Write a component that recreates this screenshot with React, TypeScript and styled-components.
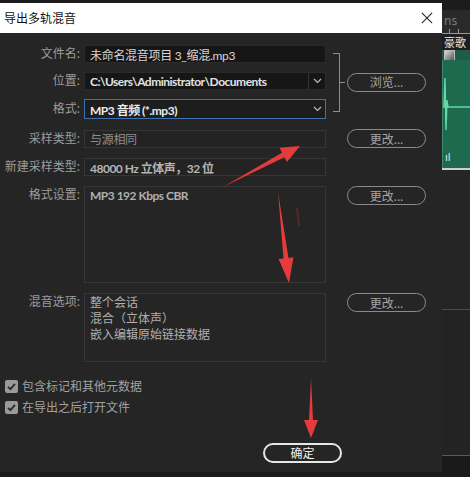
import React from "react";
import styled, { createGlobalStyle } from "styled-components";

const GlobalStyle = createGlobalStyle`
  html, body {
    margin: 0;
    padding: 0;
    background: #1b1b1b;
  }
  body {
    font-family: "Noto Sans", "Noto Sans CJK SC", sans-serif;
  }
`;

const CJK = `"Noto Sans", "Noto Sans CJK SC", sans-serif`;
const FIELD = `Lato, "Noto Sans CJK SC", sans-serif`;

// annotation arrows drawn on top of the screenshot
type ArrowSpec = { tail: [number, number]; tip: [number, number]; hl: number; hw: number; sw: number };

const arrows: ArrowSpec[] = [
  { tail: [223, 187], tip: [300, 146], hl: 19, hw: 16, sw: 5 },
  { tail: [278, 192], tip: [289, 283], hl: 25, hw: 15, sw: 5 },
  { tail: [311, 378], tip: [311, 438], hl: 18, hw: 14, sw: 4 },
];

function arrowPoints(a: ArrowSpec) {
  const [tx, ty] = a.tail;
  const [px, py] = a.tip;
  const len = Math.hypot(px - tx, py - ty);
  const dx = (px - tx) / len;
  const dy = (py - ty) / len;
  const nx = -dy;
  const ny = dx;
  const bx = px - dx * a.hl;
  const by = py - dy * a.hl;
  const pts = [
    [tx, ty],
    [bx + (nx * a.sw) / 2, by + (ny * a.sw) / 2],
    [bx + (nx * a.hw) / 2, by + (ny * a.hw) / 2],
    [px, py],
    [bx - (nx * a.hw) / 2, by - (ny * a.hw) / 2],
    [bx - (nx * a.sw) / 2, by - (ny * a.sw) / 2],
  ];
  return pts.map((p) => p.join(",")).join(" ");
}

function Check() {
  return (
    <CheckBox>
      <svg width="11" height="11" viewBox="0 0 11 11">
        <path d="M2 5.8 L4.4 8.2 L9 2.8" stroke="#2a2a2a" strokeWidth="1.8" fill="none" />
      </svg>
    </CheckBox>
  );
}

function ChevronSvg() {
  return (
    <svg width="9" height="6" viewBox="0 0 9 6">
      <path d="M1 1 L4.5 4.5 L8 1" stroke="#bdbdbd" strokeWidth="1.2" fill="none" />
    </svg>
  );
}

export default function App() {
  return (
    <Page>
      <GlobalStyle />
      <Dialog>
        <TitleBar>
          <Title>导出多轨混音</Title>
          <CloseIcon viewBox="0 0 14 14">
            <path d="M1 1 L13 13 M13 1 L1 13" stroke="#222" strokeWidth="1.2" fill="none" />
          </CloseIcon>
        </TitleBar>
        <Body>
          <FileGroup>
            <FileRows>
              <Row>
                <Label>文件名:</Label>
                <Field $tone="dark">
                  <FieldText $color="#d6d6d6">未命名混音项目 3_缩混.mp3</FieldText>
                </Field>
              </Row>
              <Row>
                <Label>位置:</Label>
                <Field $tone="dark">
                  <FieldText $color="#e2e2e2" $bold>
                    C:\Users\Administrator\Documents
                  </FieldText>
                  <Chevron $divider>
                    <ChevronSvg />
                  </Chevron>
                </Field>
              </Row>
              <Row>
                <Label>格式:</Label>
                <Field $tone="focus">
                  <FieldText $color="#ececec" $bold>
                    MP3 音频 (*.mp3)
                  </FieldText>
                  <Chevron>
                    <ChevronSvg />
                  </Chevron>
                </Field>
              </Row>
            </FileRows>
            <Bracket />
            <PillButton>浏览...</PillButton>
          </FileGroup>

          <Row>
            <Label>采样类型:</Label>
            <Field $tone="flat">
              <FieldText $color="#8e8e8e">与源相同</FieldText>
            </Field>
            <PillButton $gap>更改...</PillButton>
          </Row>

          <Row>
            <Label>新建采样类型:</Label>
            <Field $tone="flat">
              <FieldText $color="#b4b4b4" $bold>
                48000 Hz 立体声，32 位
              </FieldText>
            </Field>
          </Row>

          <Row $top>
            <Label>格式设置:</Label>
            <Box $h={97}>
              <BoxLine $bold>MP3 192 Kbps CBR</BoxLine>
            </Box>
            <PillButton $gap>更改...</PillButton>
          </Row>

          <Row $top>
            <Label>混音选项:</Label>
            <Box $h={69}>
              <BoxLine>整个会话</BoxLine>
              <BoxLine>混合（立体声）</BoxLine>
              <BoxLine>嵌入编辑原始链接数据</BoxLine>
            </Box>
            <PillButton $gap>更改...</PillButton>
          </Row>

          <Checks>
            <CheckRow>
              <Check />
              <CheckLabel>包含标记和其他元数据</CheckLabel>
            </CheckRow>
            <CheckRow>
              <Check />
              <CheckLabel>在导出之后打开文件</CheckLabel>
            </CheckRow>
          </Checks>

          <Footer>
            <OkButton>确定</OkButton>
          </Footer>
        </Body>
      </Dialog>

      <Backdrop>
        <Seg $h={10} $bg="#1c1c1c" />
        <Seg $h={20} $bg="#2a2a2a">
          <StripText $color="#7a7a7a">ns</StripText>
        </Seg>
        <Ruler>
          <Tick $x={7} />
          <Tick $x={16} />
        </Ruler>
        <Seg $h={16} $bg="#1e1e1e">
          <StripText $color="#eeeeee" $size={11}>
            豪歌
          </StripText>
        </Seg>
        <Seg $h={10} $bg="#1f5c45">
          <ClipIcon />
        </Seg>
        <Wave>
          <svg width="28" height="108" viewBox="0 0 28 108">
            <path d="M0 47 L2 47 L3 18 L4 70 L5 40 L6 47 L28 47" stroke="#63d9ab" strokeWidth="1.4" fill="none" />
            <line x1="0.5" y1="0" x2="0.5" y2="108" stroke="#3f8a6c" strokeWidth="1" />
          </svg>
          <WaveLabel>ıl</WaveLabel>
        </Wave>
        <Seg $h={2} $bg="#cfcfcf" />
        <Seg $h={139} $bg="#252525" />
        <Seg $h={1} $bg="#4a4a4a" />
        <Seg $h={145} $bg="#232323" />
        <Seg $h={1} $bg="#5a5a5a" />
        <Seg $h={22} $bg="#1a1a1a" />
      </Backdrop>

      <Annotations width="470" height="477" viewBox="0 0 470 477">
        {arrows.map((a, i) => (
          <polygon key={i} points={arrowPoints(a)} fill="#e63b3b" />
        ))}
        <path d="M297 208 L299 226" stroke="#7a2a2a" strokeWidth="2" opacity="0.6" />
      </Annotations>
    </Page>
  );
}

const Page = styled.div`
  position: relative;
  width: 470px;
  height: 477px;
  display: flex;
  overflow: hidden;
  background: #1b1b1b;
`;

const Dialog = styled.div`
  width: 442px;
  height: 470px;
  margin-top: 3px;
  background: #252525;
  display: flex;
  flex-direction: column;
  border-bottom: 1px solid #1d1d1d;
  box-sizing: border-box;
`;

const TitleBar = styled.div`
  height: 30px;
  background: #ffffff;
  display: flex;
  align-items: center;
  justify-content: space-between;
  padding: 0 9px 0 4px;
  flex-shrink: 0;
`;

const Title = styled.div`
  font-family: ${CJK};
  font-size: 12px;
  color: #111;
`;

const CloseIcon = styled.svg`
  width: 12px;
  height: 12px;
`;

const Body = styled.div`
  flex: 1;
  display: flex;
  flex-direction: column;
  gap: 10px;
  padding-top: 12px;
`;

const FileGroup = styled.div`
  display: flex;
  align-items: center;
`;

const FileRows = styled.div`
  display: flex;
  flex-direction: column;
  gap: 9px;
`;

const Row = styled.div<{ $top?: boolean }>`
  display: flex;
  align-items: ${(p) => (p.$top ? "flex-start" : "center")};
`;

const Label = styled.div`
  width: 80px;
  margin-right: 4px;
  text-align: right;
  font-family: ${CJK};
  font-size: 12px;
  line-height: 18px;
  color: #9c9c9c;
  white-space: nowrap;
  flex-shrink: 0;
`;

const Field = styled.div<{ $tone: "dark" | "focus" | "flat" }>`
  width: 242px;
  height: ${(p) => (p.$tone === "focus" ? 20 : 18)}px;
  box-sizing: border-box;
  display: flex;
  align-items: center;
  padding-left: 5px;
  background: ${(p) => (p.$tone === "flat" ? "#232323" : p.$tone === "focus" ? "#1d1d1d" : "#161616")};
  border: 1px solid
    ${(p) => (p.$tone === "focus" ? "#3f72ab" : p.$tone === "flat" ? "#363636" : "#2a2a2a")};
  flex-shrink: 0;
`;

const FieldText = styled.span<{ $color: string; $bold?: boolean }>`
  flex: 1;
  font-family: ${FIELD};
  font-size: 12px;
  font-weight: ${(p) => (p.$bold ? 700 : 400)};
  letter-spacing: ${(p) => (p.$bold ? -0.5 : -0.3)}px;
  color: ${(p) => p.$color};
  white-space: nowrap;
  overflow: hidden;
`;

const Chevron = styled.div<{ $divider?: boolean }>`
  width: 16px;
  align-self: stretch;
  display: flex;
  align-items: center;
  justify-content: center;
  border-left: 1px solid ${(p) => (p.$divider ? "#333" : "transparent")};
`;

const Box = styled.div<{ $h: number }>`
  width: 242px;
  height: ${(p) => p.$h}px;
  box-sizing: border-box;
  border: 1px solid #363636;
  padding: 1px 5px;
  display: flex;
  flex-direction: column;
  flex-shrink: 0;
`;

const BoxLine = styled.div<{ $bold?: boolean }>`
  font-family: ${FIELD};
  font-size: 12px;
  font-weight: ${(p) => (p.$bold ? 700 : 400)};
  letter-spacing: ${(p) => (p.$bold ? -0.5 : 0)}px;
  line-height: 16px;
  color: #b0b0b0;
`;

const Bracket = styled.div`
  position: relative;
  width: 7px;
  height: 59px;
  margin-left: 7px;
  border: 1px solid #8d8d8d;
  border-left: none;
  box-sizing: border-box;
  &::after {
    content: "";
    position: absolute;
    left: 6px;
    top: 28px;
    width: 6px;
    height: 1px;
    background: #8d8d8d;
  }
`;

const PillButton = styled.div<{ $gap?: boolean }>`
  width: 79px;
  height: 19px;
  box-sizing: border-box;
  margin-left: ${(p) => (p.$gap ? 21 : 7)}px;
  border: 1.5px solid #8a8a8a;
  border-radius: 10px;
  display: flex;
  align-items: center;
  justify-content: center;
  font-family: ${CJK};
  font-size: 12px;
  color: #a4a4a4;
  flex-shrink: 0;
`;

const Checks = styled.div`
  display: flex;
  flex-direction: column;
  gap: 3px;
  padding-left: 5px;
  margin-top: 5px;
`;

const CheckRow = styled.div`
  display: flex;
  align-items: center;
  gap: 4px;
`;

const CheckBox = styled.div`
  width: 13px;
  height: 13px;
  border-radius: 2px;
  background: #9a9a9a;
  display: flex;
  align-items: center;
  justify-content: center;
`;

const CheckLabel = styled.span`
  font-family: ${CJK};
  font-size: 12px;
  color: #a2a2a2;
`;

const Footer = styled.div`
  display: flex;
  padding-left: 263px;
  margin-top: 17px;
`;

const OkButton = styled.div`
  width: 79px;
  height: 20px;
  box-sizing: border-box;
  border: 2px solid #e6e6e6;
  border-radius: 10px;
  display: flex;
  align-items: center;
  justify-content: center;
  font-family: ${CJK};
  font-size: 12px;
  color: #f2f2f2;
`;

const Backdrop = styled.div`
  flex: 1;
  display: flex;
  flex-direction: column;
  overflow: hidden;
`;

const Seg = styled.div<{ $h: number; $bg: string }>`
  height: ${(p) => p.$h}px;
  background: ${(p) => p.$bg};
  flex-shrink: 0;
  display: flex;
  align-items: center;
  padding-left: 2px;
  overflow: hidden;
`;

const StripText = styled.span<{ $color: string; $size?: number }>`
  font-family: ${CJK};
  font-size: ${(p) => p.$size ?? 12}px;
  color: ${(p) => p.$color};
  white-space: nowrap;
`;

const Ruler = styled.div`
  position: relative;
  height: 3px;
  background: #2a2a2a;
  border-bottom: 1px solid #9a9a9a;
  flex-shrink: 0;
`;

const Tick = styled.div<{ $x: number }>`
  position: absolute;
  left: ${(p) => p.$x}px;
  bottom: 0;
  width: 1px;
  height: 4px;
  background: #9a9a9a;
`;

const ClipIcon = styled.div`
  width: 9px;
  height: 9px;
  border: 1px solid #bbb;
  background: linear-gradient(135deg, #dcdcdc, #555);
`;

const Wave = styled.div`
  position: relative;
  height: 108px;
  background: #1d6a4f;
  flex-shrink: 0;
`;

const WaveLabel = styled.span`
  position: absolute;
  left: 3px;
  bottom: 4px;
  font-family: ${CJK};
  font-size: 11px;
  color: #d8efe6;
`;

const Annotations = styled.svg`
  position: absolute;
  left: 0;
  top: 0;
  pointer-events: none;
`;
